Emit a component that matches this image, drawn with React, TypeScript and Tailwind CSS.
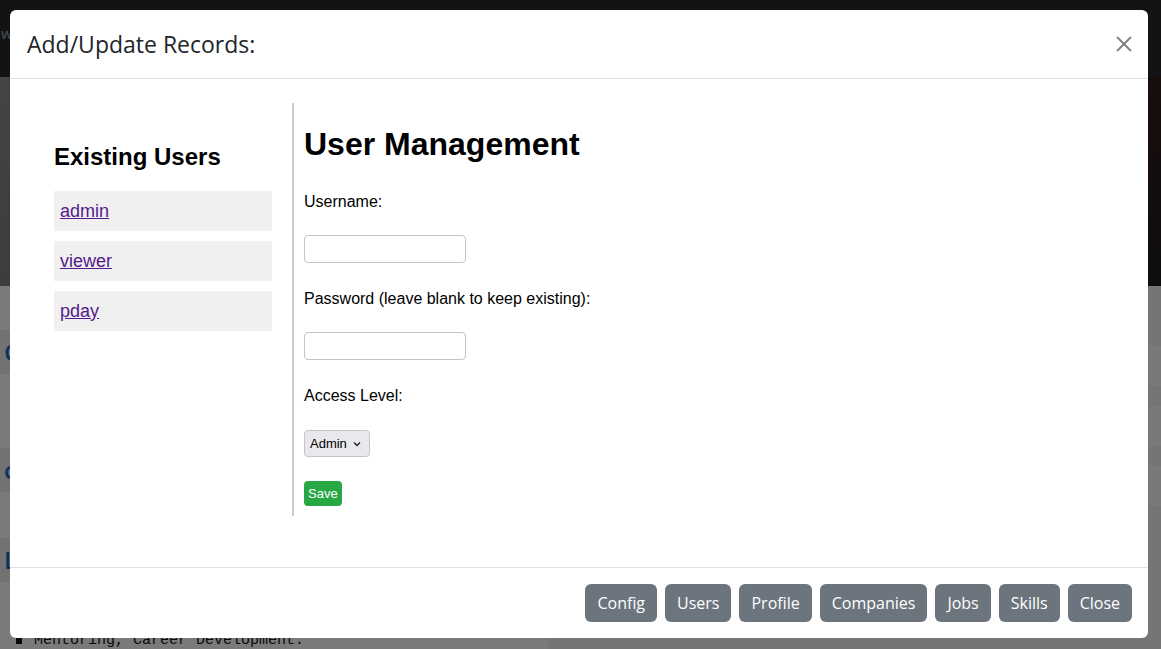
import React from "react";

const users = ["admin", "viewer", "pday"];
const footerButtons = ["Config", "Users", "Profile", "Companies", "Jobs", "Skills", "Close"];

const BackgroundPage = () => {
  return (
    <div className="w-full h-[649px] flex flex-col bg-[#f5f5f5] overflow-hidden">
      <div className="h-[77px] shrink-0 bg-[#25272b] flex items-start pt-[22px]">
        <span className="text-[#9aa0a6] text-[15px] pl-[1px]" style={{ fontFamily: "'Open Sans', sans-serif" }}>
          wz
        </span>
      </div>
      <div className="h-[209px] shrink-0 bg-[linear-gradient(100deg,#8a8a8a_0%,#111_25%,#000_45%,#3a0b0d_70%,#7a1e20_85%,#1a1a1a_100%)]" />
      <div className="flex-1 flex">
        <div className="w-[548px] flex flex-col" style={{ fontFamily: "'Open Sans', sans-serif" }}>
          <div className="h-[44px] shrink-0 mt-[44px] bg-[#e4e4e4] flex items-center pl-[4px] text-[#1464c0] text-[24px] font-semibold">C</div>
          <div className="h-[44px] shrink-0 mt-[74px] bg-[#e4e4e4] flex items-center pl-[4px] text-[#1464c0] text-[24px] font-semibold">c</div>
          <div className="h-[44px] shrink-0 mt-[46px] bg-[#e4e4e4] flex items-center pl-[4px] text-[#1464c0] text-[24px] font-semibold">L</div>
          <div className="shrink-0 mt-[50px] flex items-center gap-[12px] pl-[16px] text-[#111] text-[15px] leading-[17px]" style={{ fontFamily: "'Liberation Mono', monospace" }}>
            <span className="w-[6px] h-[6px] bg-[#111]" />
            <span>Mentoring, Career Development.</span>
          </div>
        </div>
        <div className="flex-1 bg-[#ebebeb] flex flex-col">
          <div className="h-[60px] shrink-0" />
          <div className="h-[40px] shrink-0 bg-[#f2f2f2]" />
          <div className="h-[40px] shrink-0 mt-[20px] bg-[#f2f2f2]" />
          <div className="h-[40px] shrink-0 mt-[20px] bg-[#f2f2f2]" />
        </div>
      </div>
    </div>
  );
};

export default function App() {
  return (
    <div className="relative w-[1161px] h-[649px] overflow-hidden">
      <BackgroundPage />
      <div className="absolute inset-0 bg-black/50" />

      <div className="absolute left-[10px] top-[10px] w-[1138px] h-[628px] bg-white rounded-[6px] flex flex-col overflow-hidden">
        {/* header */}
        <div className="h-[69px] flex items-center justify-between pl-[17px] pr-[8px] border-b border-[#dee2e6]">
          <h4
            className="text-[23px] leading-[36px] text-[#212529] font-normal"
            style={{ fontFamily: "'Open Sans', 'Noto Sans', sans-serif" }}
          >
            Add/Update Records:
          </h4>
          <button className="w-[32px] h-[32px] flex items-center justify-center opacity-50">
            <svg width="16" height="16" viewBox="0 0 16 16">
              <path d="M1 1L15 15M15 1L1 15" stroke="#000" strokeWidth="1.8" fill="none" />
            </svg>
          </button>
        </div>

        {/* body */}
        <div className="flex-1 p-4" style={{ fontFamily: "'Liberation Sans', Arial, sans-serif" }}>
          <div className="flex p-2">
            <div className="w-[260px] px-[20px] pt-[40px] border-r-2 border-[#cccccc]">
              <h2 className="text-[24px] leading-[28px] font-bold text-black">Existing Users</h2>
              <ul className="mt-[20px] flex flex-col gap-[10px]">
                {users.map((u) => (
                  <li key={u} className="bg-[#f0f0f0] h-[40px] flex items-center px-[6px]">
                    <a href="#" className="text-[18px] leading-[21px] text-[#551a8b] underline">
                      {u}
                    </a>
                  </li>
                ))}
              </ul>
            </div>
            <div className="flex-1 pl-[10px] pt-[23px] pb-[10px] flex flex-col items-start text-black">
              <h1 className="text-[32px] leading-[37px] font-bold">User Management</h1>
              <label className="mt-[29px] text-[16px] leading-[19px]">Username:</label>
              <input className="mt-[24px] w-[162px] h-[28px] border border-[#c4c4c4] rounded-[4px] px-[4px] text-[13px] outline-none" />
              <label className="mt-[26px] text-[16px] leading-[19px]">Password (leave blank to keep existing):</label>
              <input
                type="password"
                className="mt-[24px] w-[162px] h-[28px] border border-[#c4c4c4] rounded-[4px] px-[4px] text-[13px] outline-none"
              />
              <label className="mt-[26px] text-[16px] leading-[19px]">Access Level:</label>
              <div className="mt-[25px] relative w-[66px] h-[27px] bg-[#e9e9ed] border border-[#c4c4c4] rounded-[4px] flex items-center pl-[5px] text-[13px]">
                <span>Admin</span>
                <svg className="absolute right-[8px] top-[10px]" width="8" height="6" viewBox="0 0 8 6">
                  <path d="M1 1.5L4 4.5L7 1.5" stroke="#222" strokeWidth="1.4" fill="none" />
                </svg>
              </div>
              <button className="mt-[24px] h-[25px] px-[4px] bg-[#28a745] text-white text-[13px] rounded-[4px]">
                Save
              </button>
            </div>
          </div>
        </div>

        {/* footer */}
        <div
          className="h-[71px] border-t border-[#dee2e6] flex items-center justify-end gap-[8px] px-[16px]"
          style={{ fontFamily: "'Open Sans', 'Noto Sans', sans-serif" }}
        >
          {footerButtons.map((b) => (
            <button key={b} className="h-[38px] px-[12px] bg-[#6c757d] text-white text-[16px] rounded-[6px]">
              {b}
            </button>
          ))}
        </div>
      </div>
    </div>
  );
}
